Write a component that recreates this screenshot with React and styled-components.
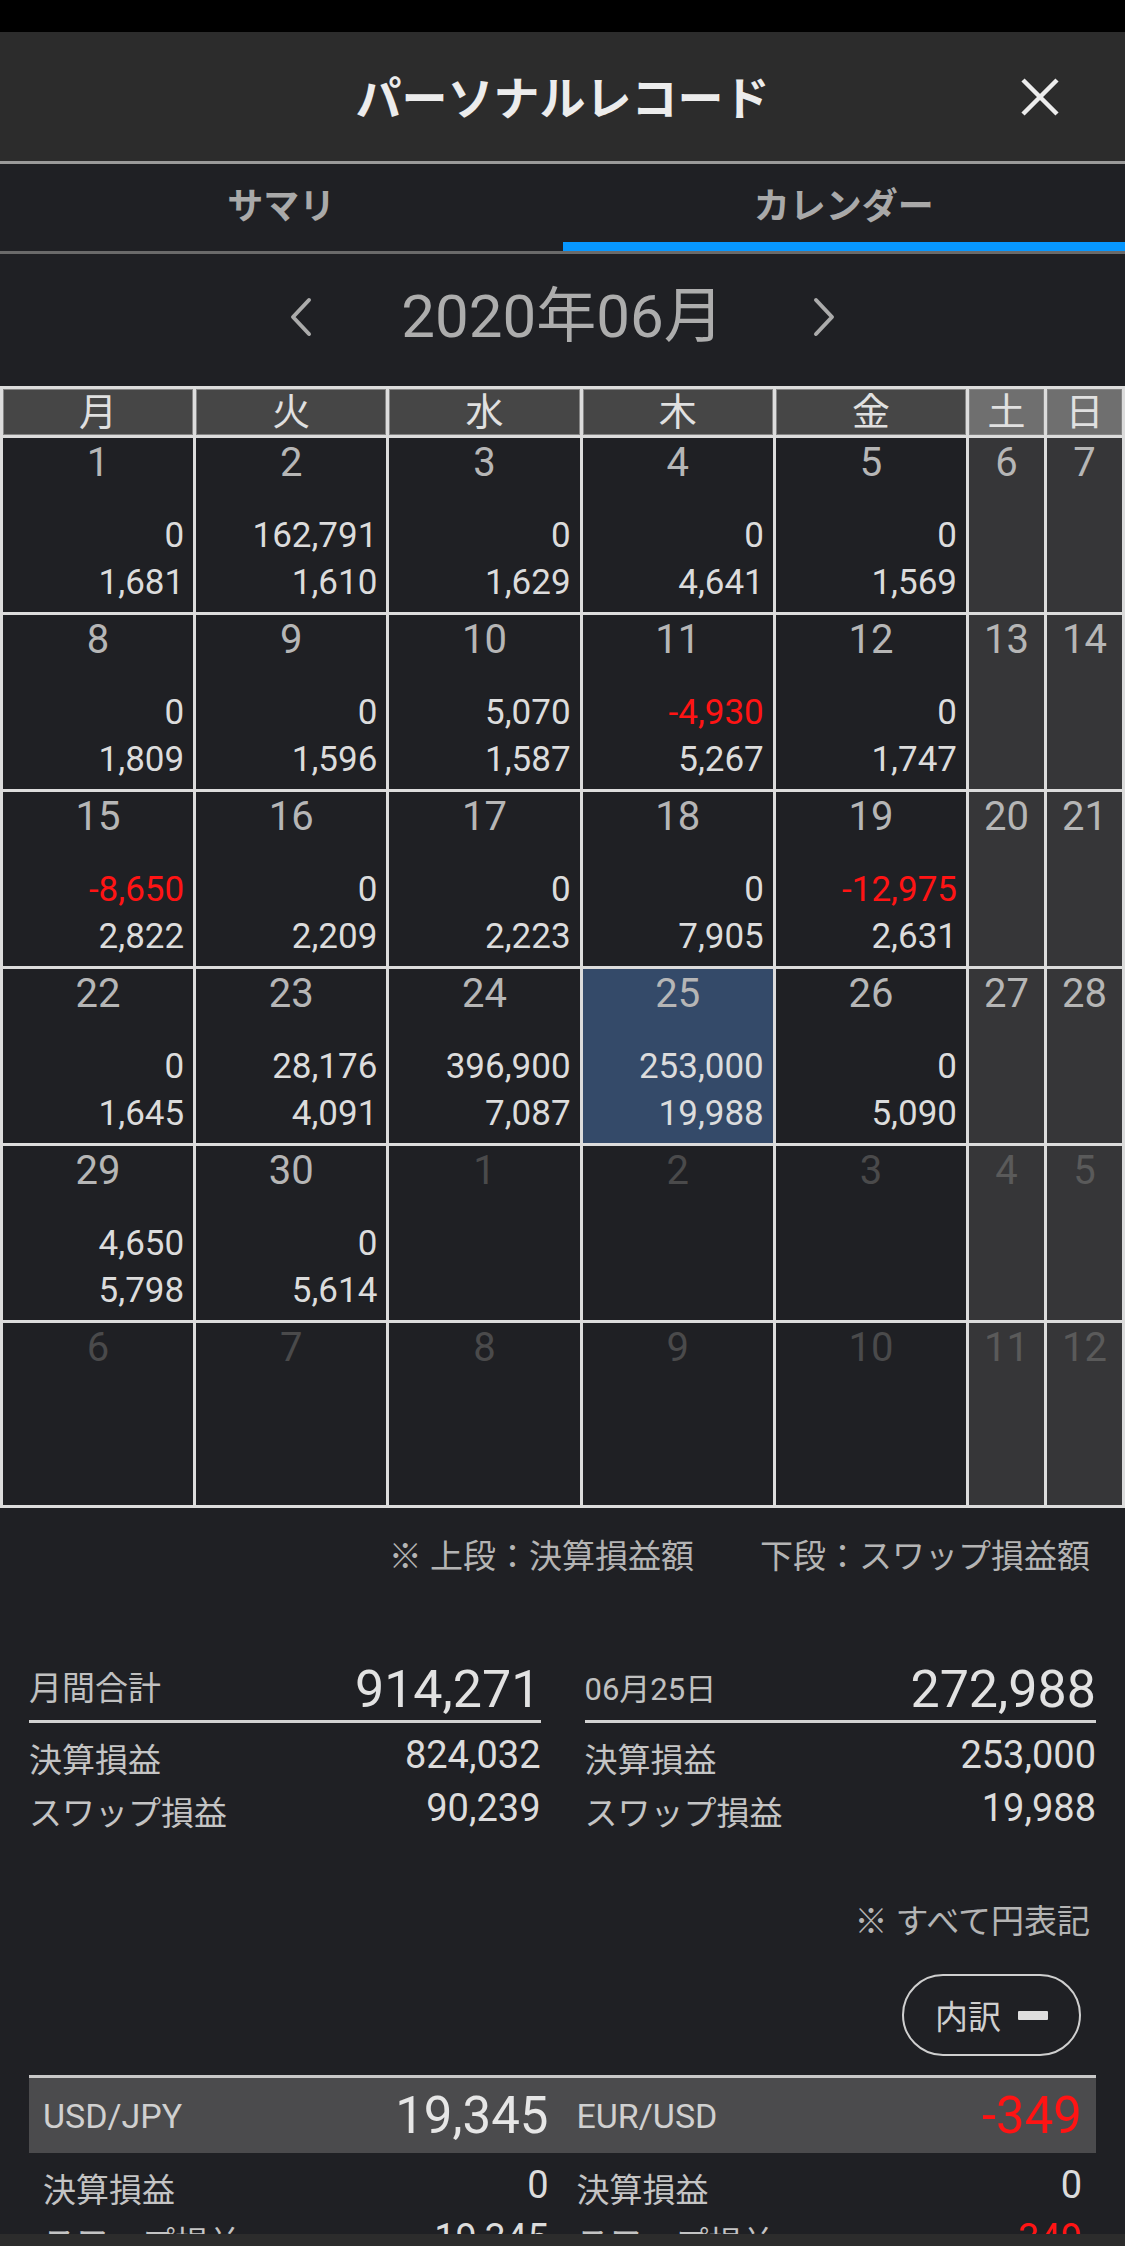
import React from 'react';
import styled, { createGlobalStyle } from 'styled-components';

const Global = createGlobalStyle`
  html, body { margin: 0; padding: 0; background: #1f2024; }
  body { font-family: Roboto, "Noto Sans CJK JP", "Noto Sans", sans-serif; }
  * { box-sizing: border-box; }
`;

const Screen = styled.div`
  width: 1125px;
  height: 2246px;
  display: flex;
  flex-direction: column;
  overflow: hidden;
  background: #1f2024;
  color: #dcdcdc;
`;

const StatusBar = styled.div`
  flex: none;
  height: 32px;
  background: #000;
`;

const Header = styled.header`
  flex: none;
  height: 132px;
  background: #2c2c2c;
  border-bottom: 3px solid #9a9a9a;
  display: grid;
  grid-template-columns: 1fr auto 1fr;
  align-items: center;
`;

const Title = styled.h1`
  grid-column: 2;
  margin: 0;
  font-size: 46px;
  font-weight: 700;
  color: #ececec;
  line-height: 1;
  padding-top: 4px;
`;

const CloseButton = styled.button`
  justify-self: end;
  margin-right: 62px;
  width: 46px;
  height: 46px;
  padding: 0;
  border: 0;
  background: none;
  display: flex;
  align-items: center;
  justify-content: center;
`;

const TabBar = styled.nav`
  flex: none;
  display: flex;
  border-bottom: 3px solid #6a6a6a;
`;

const Tab = styled.div`
  flex: 1;
  height: 87px;
  border-bottom: 9px solid ${(p) => (p.$active ? '#0797ff' : 'transparent')};
  display: flex;
  align-items: center;
  justify-content: center;
  font-size: 36px;
  font-weight: 700;
  color: #a9a9a9;
`;

const Body = styled.div`
  flex: 1;
  min-height: 0;
  overflow: hidden;
  display: flex;
  flex-direction: column;
  & > * {
    flex-shrink: 0;
  }
`;

const MonthNav = styled.div`
  height: 132px;
  display: flex;
  align-items: center;
  justify-content: center;
  gap: 89px;
  padding-bottom: 6px;
`;

const MonthLabel = styled.div`
  font-size: 60px;
  color: #adadad;
  line-height: 1;
`;

const NavArrow = styled.button`
  width: 22px;
  height: 40px;
  padding: 0;
  border: 0;
  background: none;
  display: flex;
`;

const Calendar = styled.div`
  display: grid;
  grid-template-columns: repeat(5, 1fr) 75px 75px;
  grid-template-rows: 46px repeat(5, 174px) 182px;
  gap: 3px;
  padding: 3px;
  background: #dcdcdc;
`;

const WeekHead = styled.div`
  background: ${(p) => (p.$weekend ? '#6f6f6f' : '#464646')};
  border: 1px solid #858585;
  display: flex;
  align-items: center;
  justify-content: center;
  font-size: 38px;
  color: #e0e0e0;
  line-height: 1;
`;

const DayCell = styled.div`
  background: ${(p) => (p.$selected ? '#344a69' : p.$weekend ? '#363638' : '#1f2024')};
  display: flex;
  flex-direction: column;
`;

const DayNum = styled.div`
  text-align: center;
  font-size: 40px;
  line-height: 50px;
  color: ${(p) => (p.$dim ? (p.$weekend ? '#5a5a5a' : '#4a4a4b') : '#b6b6b6')};
`;

const Values = styled.div`
  margin-top: 24px;
  padding-right: 9px;
  text-align: right;
  font-size: 35px;
  line-height: 47px;
`;

const Amount = styled.div`
  color: ${(p) => (p.$neg ? '#ff1414' : '#dcdcdc')};
`;

const Note = styled.p`
  margin: 24px 35px 0 0;
  text-align: right;
  font-size: 33px;
  line-height: 50px;
  color: #b4b4b4;
`;

const NoteGap = styled.span`
  margin-left: 66px;
`;

const Summary = styled.div`
  margin-top: 78px;
  padding: 0 29px;
  display: grid;
  grid-template-columns: 1fr 1fr;
  column-gap: 44px;
`;

const SumBlock = styled.div`
  display: flex;
  flex-direction: column;
`;

const SumHead = styled.div`
  height: 63px;
  display: flex;
  align-items: center;
  justify-content: space-between;
  border-bottom: 3px solid #d2d2d2;
`;

const SumHeadLabel = styled.span`
  font-size: ${(p) => (p.$small ? '31px' : '33px')};
  color: #c0c0c0;
  margin-top: -8px;
`;

const BigValue = styled.span`
  font-size: 52px;
  line-height: 60px;
  color: #e2e2e2;
`;

const SumRows = styled.div`
  padding-top: 7px;
`;

const Row = styled.div`
  display: flex;
  justify-content: space-between;
  align-items: center;
  height: 53px;
`;

const RowLabel = styled.span`
  font-size: 33px;
  color: #c4c4c4;
  margin-top: 2px;
`;

const RowValue = styled.span`
  font-size: 38px;
  color: ${(p) => (p.$neg ? '#ff1414' : '#dcdcdc')};
  margin-top: -4px;
`;

const Note2 = styled(Note)`
  margin-top: 61px;
`;

const BreakdownButton = styled.button`
  align-self: flex-end;
  margin: 27px 44px 0 0;
  width: 179px;
  height: 82px;
  border: 2.5px solid #cfcfcf;
  border-radius: 41px;
  background: transparent;
  display: flex;
  align-items: center;
  justify-content: center;
  gap: 17px;
  font-family: inherit;
  font-size: 33px;
  color: #cfcfcf;
  padding: 0;
`;

const Dash = styled.span`
  width: 30px;
  height: 9px;
  background: #dedede;
  border-radius: 1px;
`;

const PairTable = styled.div`
  margin: 19px 29px 0;
  border-top: 3px solid #c8c8c8;
`;

const PairGrid = styled.div`
  display: grid;
  grid-template-columns: 1fr 1fr;
  background: ${(p) => (p.$head ? '#4b4b4d' : 'transparent')};
  padding-top: ${(p) => (p.$head ? '0' : '7px')};
`;

const PairCell = styled.div`
  display: flex;
  justify-content: space-between;
  align-items: center;
  height: ${(p) => (p.$head ? '75px' : '53px')};
  padding: 0 14px;
`;

const PairName = styled.span`
  font-size: 34px;
  color: #d0d0d0;
`;

const PairValue = styled.span`
  font-size: 51px;
  color: ${(p) => (p.$neg ? '#ff1414' : '#e6e6e6')};
`;

const Footer = styled.div`
  flex: none;
  height: 12px;
  background: #2c2c2c;
`;

const CloseIcon = () => (
  <svg width="38" height="38" viewBox="0 0 38 38">
    <path d="M2 2 L36 36 M36 2 L2 36" stroke="#ececec" strokeWidth="4.5" fill="none" />
  </svg>
);

const Chevron = ({ dir }) => (
  <svg width="22" height="40" viewBox="0 0 22 40">
    <polyline
      points={dir === 'left' ? '19,3 3,20 19,37' : '3,3 19,20 3,37'}
      stroke="#ababab"
      strokeWidth="4"
      strokeLinecap="round"
      strokeLinejoin="round"
      fill="none"
    />
  </svg>
);

const WEEKDAYS = ['月', '火', '水', '木', '金', '土', '日'];

const d = (n, a, b, extra = {}) => ({ n, a, b, ...extra });
const dim = (n) => ({ n, dim: true });

const WEEKS = [
  [d(1, '0', '1,681'), d(2, '162,791', '1,610'), d(3, '0', '1,629'), d(4, '0', '4,641'), d(5, '0', '1,569'), d(6), d(7)],
  [d(8, '0', '1,809'), d(9, '0', '1,596'), d(10, '5,070', '1,587'), d(11, '-4,930', '5,267'), d(12, '0', '1,747'), d(13), d(14)],
  [d(15, '-8,650', '2,822'), d(16, '0', '2,209'), d(17, '0', '2,223'), d(18, '0', '7,905'), d(19, '-12,975', '2,631'), d(20), d(21)],
  [d(22, '0', '1,645'), d(23, '28,176', '4,091'), d(24, '396,900', '7,087'), d(25, '253,000', '19,988', { selected: true }), d(26, '0', '5,090'), d(27), d(28)],
  [d(29, '4,650', '5,798'), d(30, '0', '5,614'), dim(1), dim(2), dim(3), dim(4), dim(5)],
  [dim(6), dim(7), dim(8), dim(9), dim(10), dim(11), dim(12)],
];

const isNeg = (v) => typeof v === 'string' && v.startsWith('-');

export default function App() {
  return (
    <>
      <Global />
      <Screen>
        <StatusBar />
        <Header>
          <Title>パーソナルレコード</Title>
          <CloseButton aria-label="閉じる">
            <CloseIcon />
          </CloseButton>
        </Header>
        <TabBar>
          <Tab>サマリ</Tab>
          <Tab $active>カレンダー</Tab>
        </TabBar>
        <Body>
          <MonthNav>
            <NavArrow aria-label="前月">
              <Chevron dir="left" />
            </NavArrow>
            <MonthLabel>2020年06月</MonthLabel>
            <NavArrow aria-label="翌月">
              <Chevron dir="right" />
            </NavArrow>
          </MonthNav>

          <Calendar>
            {WEEKDAYS.map((w, i) => (
              <WeekHead key={w} $weekend={i >= 5}>
                {w}
              </WeekHead>
            ))}
            {WEEKS.map((week, wi) =>
              week.map((day, di) => {
                const weekend = di >= 5;
                return (
                  <DayCell key={`${wi}-${di}`} $weekend={weekend} $selected={day.selected}>
                    <DayNum $dim={day.dim} $weekend={weekend}>
                      {day.n}
                    </DayNum>
                    {day.a !== undefined && (
                      <Values>
                        <Amount $neg={isNeg(day.a)}>{day.a}</Amount>
                        <Amount>{day.b}</Amount>
                      </Values>
                    )}
                  </DayCell>
                );
              })
            )}
          </Calendar>

          <Note>
            ※ 上段：決算損益額<NoteGap>下段：スワップ損益額</NoteGap>
          </Note>

          <Summary>
            <SumBlock>
              <SumHead>
                <SumHeadLabel>月間合計</SumHeadLabel>
                <BigValue>914,271</BigValue>
              </SumHead>
              <SumRows>
                <Row>
                  <RowLabel>決算損益</RowLabel>
                  <RowValue>824,032</RowValue>
                </Row>
                <Row>
                  <RowLabel>スワップ損益</RowLabel>
                  <RowValue>90,239</RowValue>
                </Row>
              </SumRows>
            </SumBlock>
            <SumBlock>
              <SumHead>
                <SumHeadLabel $small>06月25日</SumHeadLabel>
                <BigValue>272,988</BigValue>
              </SumHead>
              <SumRows>
                <Row>
                  <RowLabel>決算損益</RowLabel>
                  <RowValue>253,000</RowValue>
                </Row>
                <Row>
                  <RowLabel>スワップ損益</RowLabel>
                  <RowValue>19,988</RowValue>
                </Row>
              </SumRows>
            </SumBlock>
          </Summary>

          <Note2>※ すべて円表記</Note2>

          <BreakdownButton>
            内訳
            <Dash />
          </BreakdownButton>

          <PairTable>
            <PairGrid $head>
              <PairCell $head>
                <PairName>USD/JPY</PairName>
                <PairValue>19,345</PairValue>
              </PairCell>
              <PairCell $head>
                <PairName>EUR/USD</PairName>
                <PairValue $neg>-349</PairValue>
              </PairCell>
            </PairGrid>
            <PairGrid>
              <PairCell>
                <RowLabel>決算損益</RowLabel>
                <RowValue>0</RowValue>
              </PairCell>
              <PairCell>
                <RowLabel>決算損益</RowLabel>
                <RowValue>0</RowValue>
              </PairCell>
              <PairCell>
                <RowLabel>スワップ損益</RowLabel>
                <RowValue>19,345</RowValue>
              </PairCell>
              <PairCell>
                <RowLabel>スワップ損益</RowLabel>
                <RowValue $neg>-349</RowValue>
              </PairCell>
            </PairGrid>
          </PairTable>
        </Body>
        <Footer />
      </Screen>
    </>
  );
}
